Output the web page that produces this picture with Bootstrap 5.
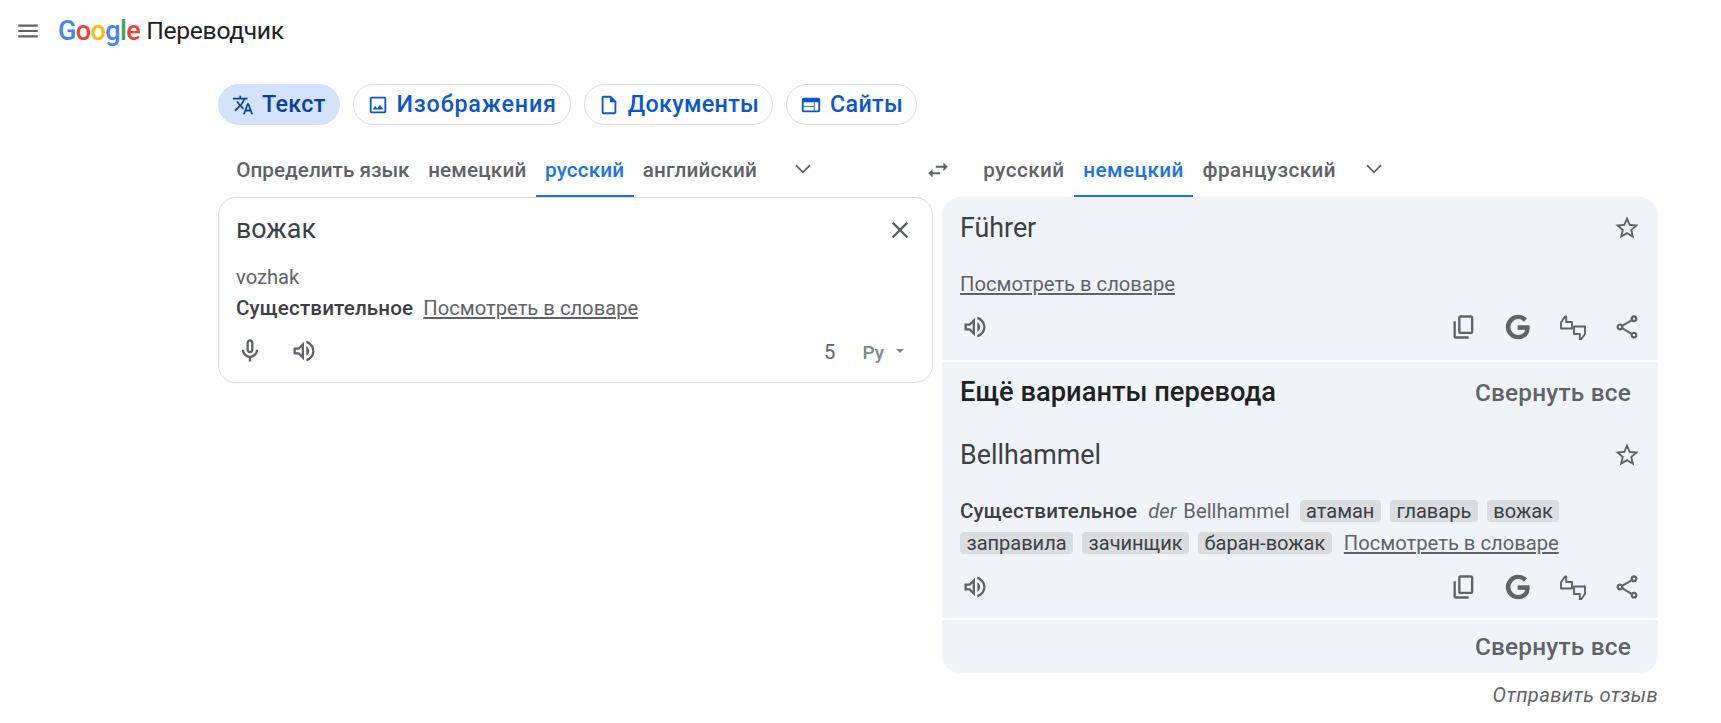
<!DOCTYPE html>
<html lang="ru">
<head>
<meta charset="utf-8">
<title>Google Переводчик</title>
<link rel="stylesheet" href="https://cdn.jsdelivr.net/npm/bootstrap@5.3.0/dist/css/bootstrap.min.css">
<style>
body{font-family:Roboto,"Liberation Sans",sans-serif;color:#3c4043;background:#fff;min-height:723px;font-size:20.2px}
svg{display:block;fill:currentColor}
.gt-head{height:60px;padding-left:15px}
.gt-menu{width:26px;height:26px;color:#5f6368;margin-right:17px;margin-top:2px}
.gt-logo{font-family:Roboto,"Liberation Sans",sans-serif;font-weight:500;font-size:27px;letter-spacing:-.6px;line-height:1;margin-right:6px;margin-top:2px}
.gt-title{font-size:24.7px;color:#202124;line-height:1;letter-spacing:-.3px;margin-top:3px}
.c-b{color:#4285f4}.c-r{color:#ea4335}.c-y{color:#fbbc05}.c-g{color:#34a853}
.gt-main{margin-left:218px;width:1440px}
.gt-chips{padding-top:24px;gap:13px}
.gt-chip{height:41px;border:1px solid #dadce0;color:#0b57d0;font-size:23.3px;font-weight:500;letter-spacing:.3px;padding:0 13px;gap:8px;line-height:1;--bs-btn-hover-color:#0b57d0}
.gt-chip svg{width:22px;height:22px;flex:none}
.gt-chip.is-on{background:#d3e3fd;border-color:#d3e3fd;color:#0842a0;padding-left:13px}
.gt-chip.is-wide{letter-spacing:.85px}
.gt-langs{height:57px;margin-top:15px}
.gt-left,.gt-right{height:57px}
.gt-left{width:712px;padding-left:9px}
.gt-tab{height:57px;padding:5px 9.3px 0;font-size:20.7px;font-weight:500;color:#5f6368;border-bottom:2px solid transparent;line-height:1;letter-spacing:.15px;white-space:nowrap}
.gt-tab.is-on{color:#1a73e8;border-bottom-color:#1a73e8}
.gt-tab.is-tight{letter-spacing:0}
.gt-right .gt-tab{letter-spacing:.45px}
.gt-chev{width:26px;height:26px;color:#5f6368;fill:none;stroke:currentColor;stroke-width:1.6;margin-left:24px}
.gt-right .gt-chev{margin-left:16px}
.gt-swap{width:26px;height:26px;color:#5f6368;margin-left:-5px;margin-top:3px;margin-right:-5px}
.gt-grid{display:grid;grid-template-columns:715px 716px;column-gap:9px;align-items:start}
.gt-src{height:186px;border:1px solid #dadce0;border-radius:18px;padding:0 17px;background:#fff}
.gt-tgt{height:476px;background:#f0f3f8;border-radius:18px;overflow:hidden}
.gt-ico{width:28px;height:28px;margin:-1px;color:#5f6368;flex:none}
.gt-rate{width:28px;height:26px;margin:0 -1px}
.gt-word{font-size:26.8px;line-height:1;color:#3c4043}
.gt-sub{color:#5f6368}
.gt-pos{font-weight:500;color:#3c4043;font-size:20.6px;letter-spacing:.15px}
.gt-link{color:#5f6368;text-decoration:underline;text-underline-offset:2px}
.gt-a{height:62px}
.gt-top{height:64px}
.gt-a2{height:32px}
.gt-a3{height:31px;line-height:1;gap:10px}
.gt-a4{height:59px;padding-bottom:4px}
.gt-pad{padding:0 18px 0 18px}
.gt-sep{height:2px;background:#fff;flex:none}
.gt-sec1{height:163px}
.gt-sec2{height:256px}
.gt-sec3{height:55px}
.gt-h{font-size:27.3px;font-weight:500;color:#202124;line-height:1}
.gt-fold{font-size:24.4px;font-weight:500;color:#5f6368;line-height:1;margin-right:9px;letter-spacing:.2px}
.gt-tag{background:#dadce0;border-radius:4px;padding:0 6.5px;margin-right:9px;line-height:22px;display:inline-block;color:#3c4043;font-size:20px}
.gt-tag.is-end{margin-right:12px}
.gt-lines{line-height:32px;padding-top:9px}
.gt-der{margin:0 2px 0 1px}
.gt-name{margin-right:10px}
.gt-foot{font-style:italic;color:#5f6368;font-size:20.2px;padding-top:10px;letter-spacing:.35px;line-height:1.2}
.gt-acts{gap:28.5px}
.gt-linkrow{height:50px}
.gt-iconrow{height:36px}
.gt-iconrow2{padding-bottom:4px}
.gt-spk{margin-left:1px}
.gt-mic{gap:28px;margin-left:1px}
.gt-ru{font-size:19px;color:#80868b;font-weight:500;line-height:1;margin-right:12px;margin-top:3px}
.gt-five{margin-right:27px;margin-top:2px}
.gt-car{width:0;height:0;border-left:4px solid transparent;border-right:4px solid transparent;border-top:4px solid #80868b;margin-right:11px}
.gt-x{margin-right:1px}
</style>
</head>
<body class="m-0">
<header class="gt-head d-flex align-items-center">
  <svg class="gt-menu" viewBox="0 0 24 24"><path d="M3 18h18v-2H3v2zm0-5h18v-2H3v2zm0-7v2h18V6H3z"/></svg>
  <span class="gt-logo"><span class="c-b">G</span><span class="c-r">o</span><span class="c-y">o</span><span class="c-b">g</span><span class="c-g">l</span><span class="c-r">e</span></span>
  <span class="gt-title">Переводчик</span>
</header>
<main class="gt-main">
  <div class="gt-chips d-flex">
    <button class="btn gt-chip is-on rounded-pill d-flex align-items-center"><svg viewBox="0 0 24 24"><path d="M12.87 15.07l-2.54-2.51.03-.03c1.74-1.94 2.98-4.17 3.71-6.53H17V4h-7V2H8v2H1v1.99h11.17C11.5 7.92 10.44 9.75 9 11.35 8.07 10.32 7.3 9.19 6.69 8h-2c.73 1.63 1.73 3.17 2.98 4.56l-5.09 5.02L4 19l5-5 3.11 3.11.76-2.04zM18.5 10h-2L12 22h2l1.12-3h4.75L21 22h2l-4.5-12zm-2.62 7l1.62-4.33L19.12 17h-3.24z"/></svg>Текст</button>
    <button class="btn gt-chip is-wide rounded-pill d-flex align-items-center"><svg viewBox="0 0 24 24"><path d="M19 5v14H5V5h14m0-2H5c-1.1 0-2 .9-2 2v14c0 1.1.9 2 2 2h14c1.1 0 2-.9 2-2V5c0-1.1-.9-2-2-2zm-4.86 8.86l-3 3.87L9 13.14 6 17h12l-3.86-5.14z"/></svg>Изображения</button>
    <button class="btn gt-chip rounded-pill d-flex align-items-center"><svg viewBox="0 0 24 24"><path d="M14 2H6c-1.1 0-1.99.9-1.99 2L4 20c0 1.1.89 2 1.99 2H18c1.1 0 2-.9 2-2V8l-6-6zM6 20V4h7v5h5v11H6z"/></svg>Документы</button>
    <button class="btn gt-chip rounded-pill d-flex align-items-center"><svg viewBox="0 0 24 24"><path d="M20 4H4c-1.1 0-1.99.9-1.99 2L2 18c0 1.1.9 2 2 2h16c1.1 0 2-.9 2-2V6c0-1.1-.9-2-2-2zm-5 14H4v-4h11v4zm0-5H4V9h11v4zm5 5h-4V9h4v9z"/></svg>Сайты</button>
  </div>
  <div class="gt-langs d-flex align-items-center">
    <div class="gt-left d-flex align-items-center">
      <span class="gt-tab is-tight d-flex align-items-center">Определить язык</span>
      <span class="gt-tab d-flex align-items-center">немецкий</span>
      <span class="gt-tab is-on d-flex align-items-center">русский</span>
      <span class="gt-tab d-flex align-items-center">английский</span>
      <svg class="gt-chev" viewBox="0 0 24 24"><path d="M5.5 8.5 12 15l6.500-6.500"/></svg>
    </div>
    <svg class="gt-swap" viewBox="0 0 24 24"><path d="M6.99 11L3 15l3.99 4v-3H14v-2H6.99v-3zM21 9l-3.99-4v3H10v2h7.01v3L21 9z"/></svg>
    <div class="gt-right d-flex align-items-center ms-4 ps-1">
      <span class="gt-tab d-flex align-items-center">русский</span>
      <span class="gt-tab is-on d-flex align-items-center">немецкий</span>
      <span class="gt-tab d-flex align-items-center">французский</span>
      <svg class="gt-chev" viewBox="0 0 24 24"><path d="M5.5 8.5 12 15l6.500-6.500"/></svg>
    </div>
  </div>
  <div class="gt-grid">
    <section class="gt-src d-flex flex-column">
      <div class="d-flex align-items-center justify-content-between gt-top">
        <span class="gt-word">вожак</span>
        <svg class="gt-ico gt-x" viewBox="0 0 24 24"><path d="M19 6.41L17.59 5 12 10.59 6.41 5 5 6.41 10.59 12 5 17.59 6.41 19 12 13.41 17.59 19 19 17.59 13.41 12z"/></svg>
      </div>
      <div class="gt-a2 d-flex align-items-center gt-sub">vozhak</div>
      <div class="gt-a3 d-flex align-items-center"><span class="gt-pos">Существительное</span><span class="gt-link">Посмотреть в словаре</span></div>
      <div class="gt-a4 d-flex align-items-center justify-content-between">
        <div class="d-flex gt-mic">
          <svg class="gt-ico" viewBox="0 0 24 24"><path d="M12 14c1.66 0 3-1.34 3-3V5c0-1.66-1.34-3-3-3S9 3.34 9 5v6c0 1.66 1.34 3 3 3zm-1-9c0-.55.45-1 1-1s1 .45 1 1v6c0 .55-.45 1-1 1s-1-.45-1-1V5zm6 6c0 2.76-2.24 5-5 5s-5-2.24-5-5H5c0 3.53 2.61 6.43 6 6.92V21h2v-3.08c3.39-.49 6-3.39 6-6.92h-2z"/></svg>
          <svg class="gt-ico" viewBox="0 0 24 24"><path d="M3 9v6h4l5 5V4L7 9H3zm7-.17v6.34L7.83 13H5v-2h2.83L10 8.83zM16.500 12c0-1.77-1.02-3.29-2.5-4.03v8.05c1.48-.73 2.5-2.25 2.5-4.02zM14 3.23v2.06c2.89.86 5 3.54 5 6.71s-2.11 5.85-5 6.71v2.06c4.01-.91 7-4.49 7-8.77 0-4.28-2.99-7.86-7-8.77z"/></svg>
        </div>
        <div class="d-flex align-items-center">
          <span class="gt-sub gt-five">5</span>
          <span class="gt-ru">Ру</span>
          <span class="gt-car"></span>
        </div>
      </div>
    </section>
    <section class="gt-tgt d-flex flex-column">
      <div class="gt-sec1 gt-pad d-flex flex-column flex-shrink-0">
        <div class="d-flex align-items-center justify-content-between gt-a">
          <span class="gt-word">Führer</span>
          <svg class="gt-ico" viewBox="0 0 24 24"><path d="M22 9.24l-7.19-.62L12 2 9.19 8.63 2 9.24l5.46 4.73L5.82 21 12 17.27 18.18 21l-1.63-7.03L22 9.24zM12 15.4l-3.76 2.27 1-4.28-3.32-2.88 4.38-.38L12 6.1l1.71 4.04 4.38.38-3.32 2.88 1 4.28L12 15.4z"/></svg>
        </div>
        <div class="d-flex align-items-center gt-linkrow"><span class="gt-link">Посмотреть в словаре</span></div>
        <div class="d-flex align-items-center justify-content-between gt-iconrow">
          <svg class="gt-ico gt-spk" viewBox="0 0 24 24"><path d="M3 9v6h4l5 5V4L7 9H3zm7-.17v6.34L7.83 13H5v-2h2.83L10 8.83zM16.500 12c0-1.77-1.02-3.29-2.5-4.03v8.05c1.48-.73 2.5-2.25 2.5-4.02zM14 3.23v2.06c2.89.86 5 3.54 5 6.71s-2.11 5.85-5 6.71v2.06c4.01-.91 7-4.49 7-8.77 0-4.28-2.99-7.86-7-8.77z"/></svg>
          <div class="d-flex gt-acts">
            <svg class="gt-ico" viewBox="0 0 24 24"><path d="M18 2H9c-1.1 0-2 .9-2 2v12c0 1.1.9 2 2 2h9c1.1 0 2-.9 2-2V4c0-1.1-.9-2-2-2zm0 14H9V4h9v12zM3 7h2v13h11v2H5c-1.1 0-2-.9-2-2V7z"/></svg>
            <svg class="gt-ico" viewBox="0 0 24 24"><path d="M21.35 11.1h-9.17v2.73h6.51c-.33 3.81-3.5 5.44-6.5 5.44C8.36 19.27 5 16.25 5 12c0-4.1 3.2-7.27 7.2-7.27 3.09 0 4.9 1.97 4.9 1.97L19 4.72S16.56 2 12.1 2C6.42 2 2.03 6.8 2.03 12c0 5.05 4.13 10 10.22 10 5.35 0 9.25-3.67 9.25-9.09 0-1.15-.15-1.81-.15-1.81z" stroke="currentColor" stroke-width="1"/></svg>
            <svg class="gt-ico gt-rate" viewBox="0 0 28 26"><path d="M2 8.500 6 2.500h1.200V8H13v6.500H2zM26 20l-4 5.500h-1.200V20H15v-7.500h11z" fill="none" stroke="currentColor" stroke-width="1.9" stroke-linejoin="round"/></svg>
            <svg class="gt-ico" viewBox="0 0 24 24"><path d="M18 16.08c-.76 0-1.44.3-1.96.77L8.91 12.7c.05-.23.09-.46.09-.7s-.04-.47-.09-.7l7.05-4.11c.54.5 1.25.81 2.04.81 1.66 0 3-1.34 3-3s-1.34-3-3-3-3 1.34-3 3c0 .24.04.47.09.7L8.04 9.81C7.5 9.31 6.79 9 6 9c-1.66 0-3 1.34-3 3s1.34 3 3 3c.79 0 1.5-.31 2.04-.81l7.12 4.16c-.05.21-.08.43-.08.65 0 1.61 1.31 2.92 2.92 2.92s2.92-1.31 2.92-2.92-1.31-2.92-2.92-2.92zM18 4c.55 0 1 .45 1 1s-.45 1-1 1-1-.45-1-1 .45-1 1-1zM6 13c-.55 0-1-.45-1-1s.45-1 1-1 1 .45 1 1-.45 1-1 1zm12 7.02c-.55 0-1-.45-1-1s.45-1 1-1 1 .45 1 1-.45 1-1 1z"/></svg>
          </div>
        </div>
      </div>
      <div class="gt-sep"></div>
      <div class="gt-sec2 gt-pad d-flex flex-column flex-shrink-0">
        <div class="d-flex align-items-center justify-content-between gt-a"><span class="gt-h">Ещё варианты перевода</span><span class="gt-fold">Свернуть все</span></div>
        <div class="d-flex align-items-center justify-content-between gt-a"><span class="gt-word">Bellhammel</span>
          <svg class="gt-ico" viewBox="0 0 24 24"><path d="M22 9.24l-7.19-.62L12 2 9.19 8.63 2 9.24l5.46 4.73L5.82 21 12 17.27 18.18 21l-1.63-7.03L22 9.24zM12 15.4l-3.76 2.27 1-4.28-3.32-2.88 4.38-.38L12 6.1l1.71 4.04 4.38.38-3.32 2.88 1 4.28L12 15.4z"/></svg>
        </div>
        <div class="gt-lines">
          <span class="gt-pos gt-name">Существительное</span><i class="gt-sub gt-der">der</i> <span class="gt-sub gt-name">Bellhammel</span><span class="gt-tag">атаман</span><span class="gt-tag">главарь</span><span class="gt-tag">вожак</span><br>
          <span class="gt-tag">заправила</span><span class="gt-tag">зачинщик</span><span class="gt-tag is-end">баран-вожак</span><span class="gt-link">Посмотреть в словаре</span>
        </div>
        <div class="d-flex align-items-center justify-content-between flex-grow-1 gt-iconrow2">
          <svg class="gt-ico gt-spk" viewBox="0 0 24 24"><path d="M3 9v6h4l5 5V4L7 9H3zm7-.17v6.34L7.83 13H5v-2h2.83L10 8.83zM16.500 12c0-1.77-1.02-3.29-2.5-4.03v8.05c1.48-.73 2.5-2.25 2.5-4.02zM14 3.23v2.06c2.89.86 5 3.54 5 6.71s-2.11 5.85-5 6.71v2.06c4.01-.91 7-4.49 7-8.77 0-4.28-2.99-7.86-7-8.77z"/></svg>
          <div class="d-flex gt-acts">
            <svg class="gt-ico" viewBox="0 0 24 24"><path d="M18 2H9c-1.1 0-2 .9-2 2v12c0 1.1.9 2 2 2h9c1.1 0 2-.9 2-2V4c0-1.1-.9-2-2-2zm0 14H9V4h9v12zM3 7h2v13h11v2H5c-1.1 0-2-.9-2-2V7z"/></svg>
            <svg class="gt-ico" viewBox="0 0 24 24"><path d="M21.35 11.1h-9.17v2.73h6.51c-.33 3.81-3.5 5.44-6.5 5.44C8.36 19.27 5 16.25 5 12c0-4.1 3.2-7.27 7.2-7.27 3.09 0 4.9 1.97 4.9 1.97L19 4.72S16.56 2 12.1 2C6.42 2 2.03 6.8 2.03 12c0 5.05 4.13 10 10.22 10 5.35 0 9.25-3.67 9.25-9.09 0-1.15-.15-1.81-.15-1.81z" stroke="currentColor" stroke-width="1"/></svg>
            <svg class="gt-ico gt-rate" viewBox="0 0 28 26"><path d="M2 8.500 6 2.500h1.200V8H13v6.500H2zM26 20l-4 5.500h-1.200V20H15v-7.500h11z" fill="none" stroke="currentColor" stroke-width="1.9" stroke-linejoin="round"/></svg>
            <svg class="gt-ico" viewBox="0 0 24 24"><path d="M18 16.08c-.76 0-1.44.3-1.96.77L8.91 12.7c.05-.23.09-.46.09-.7s-.04-.47-.09-.7l7.05-4.11c.54.5 1.25.81 2.04.81 1.66 0 3-1.34 3-3s-1.34-3-3-3-3 1.34-3 3c0 .24.04.47.09.7L8.04 9.81C7.5 9.31 6.79 9 6 9c-1.66 0-3 1.34-3 3s1.34 3 3 3c.79 0 1.5-.31 2.04-.81l7.12 4.16c-.05.21-.08.43-.08.65 0 1.61 1.31 2.92 2.92 2.92s2.92-1.31 2.92-2.92-1.31-2.92-2.92-2.92zM18 4c.55 0 1 .45 1 1s-.45 1-1 1-1-.45-1-1 .45-1 1-1zM6 13c-.55 0-1-.45-1-1s.45-1 1-1 1 .45 1 1-.45 1-1 1zm12 7.02c-.55 0-1-.45-1-1s.45-1 1-1 1 .45 1 1-.45 1-1 1z"/></svg>
          </div>
        </div>
      </div>
      <div class="gt-sep"></div>
      <div class="gt-sec3 gt-pad d-flex align-items-center justify-content-end flex-shrink-0"><span class="gt-fold">Свернуть все</span></div>
    </section>
  </div>
  <div class="gt-foot text-end">Отправить отзыв</div>
</main>
</body>
</html>
